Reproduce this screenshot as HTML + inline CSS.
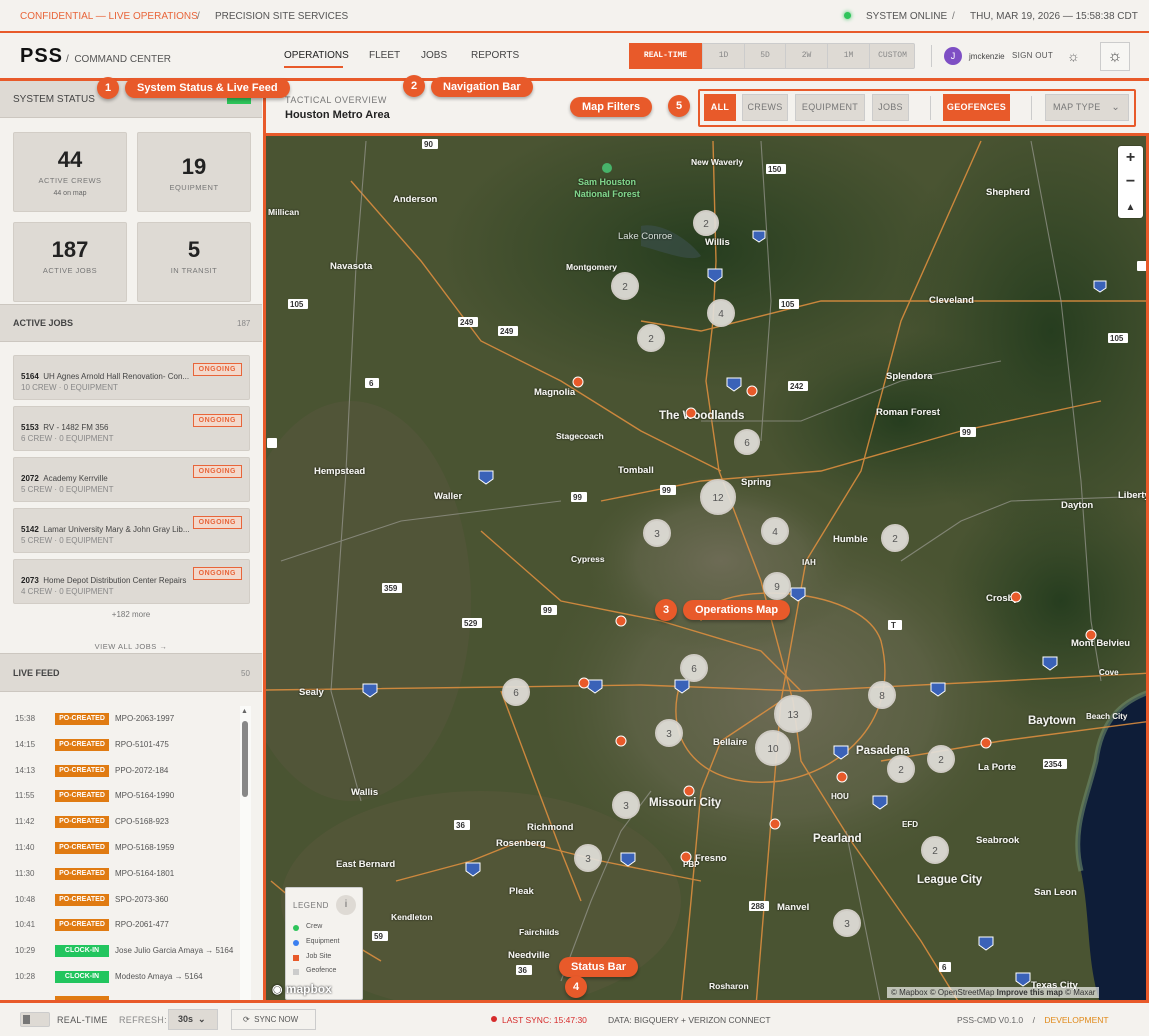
<!DOCTYPE html>
<html><head><meta charset="utf-8"><style>
*{box-sizing:border-box;margin:0;padding:0}
body{width:1149px;height:1036px;overflow:hidden;background:#f4f2ee;font-family:"Liberation Sans",sans-serif;color:#333;position:relative}
.a{position:absolute}
.t{font-size:10px;letter-spacing:0}
.hdr{background:#dedad4;border-bottom:1px solid #ccc7c0}
.card{background:#dedad4;border:1px solid #d2cdc6;border-radius:2px;text-align:center}
.job{background:#dedad4;border:1px solid #d2cdc6;border-radius:2px;left:13px;width:237px;height:45px}
.job b{font-size:8px;color:#222}.job span{font-size:8px;color:#444}
.og{position:absolute;right:7px;top:7px;border:1px solid #e8653a;color:#e8653a;font-size:7px;font-weight:bold;padding:2px 5px;background:#f3d9cc;letter-spacing:.5px}
.sub{font-size:8px;color:#888;position:absolute;left:7px;top:27px}
.feed{left:15px;font-size:8px;color:#666;width:230px;height:14px}
.tag{position:absolute;left:40px;width:54px;height:12px;color:#fff;font-size:7px;font-weight:bold;text-align:center;line-height:12px}
.fn{position:absolute;left:100px;color:#555}
.btn{position:absolute;top:94px;height:27px;background:#dedad4;border:1px solid #ccc;font-size:9px;color:#777;line-height:25px;text-align:center;letter-spacing:.3px}
.on{background:#e85a2a;color:#fff;border-color:#e85a2a;font-weight:bold}
.pill{position:absolute;background:#e85a2a;color:#fff;font-weight:bold;font-size:11px;border-radius:10px;height:20px;line-height:20px;padding:0 12px;box-shadow:0 2px 3px rgba(0,0,0,.3)}
.num{position:absolute;background:#e85a2a;color:#fff;font-weight:bold;font-size:11px;border-radius:50%;width:22px;height:22px;line-height:22px;text-align:center;box-shadow:0 2px 3px rgba(0,0,0,.3)}
.seg{position:absolute;top:43px;height:26px;border-right:1px solid #ccc;font-family:"Liberation Mono",monospace;font-size:8px;color:#888;text-align:center;line-height:26px}
</style></head><body>
<!-- top bar -->
<div class="a t" style="left:20px;top:11px;color:#e8653a">CONFIDENTIAL — LIVE OPERATIONS</div>
<div class="a t" style="left:197px;top:11px;color:#777">/</div>
<div class="a t" style="left:215px;top:11px;color:#555">PRECISION SITE SERVICES</div>
<div class="a" style="left:844px;top:12px;width:7px;height:7px;border-radius:50%;background:#2ec45a;box-shadow:0 0 4px #2ec45a"></div>
<div class="a t" style="left:866px;top:11px;color:#555">SYSTEM ONLINE</div>
<div class="a t" style="left:952px;top:11px;color:#777">/</div>
<div class="a t" style="left:970px;top:11px;color:#555">THU, MAR 19, 2026 — 15:58:38 CDT</div>
<div class="a" style="left:0;top:31px;width:1149px;height:2px;background:#e85a2a"></div>
<!-- header -->
<div class="a" style="left:20px;top:45px;font-size:20px;font-weight:bold;color:#111;letter-spacing:1px">PSS</div>
<div class="a" style="left:66px;top:54px;font-size:10px;color:#555">/ &nbsp;COMMAND CENTER</div>
<div class="a t" style="left:284px;top:50px;color:#222">OPERATIONS</div>
<div class="a" style="left:284px;top:66px;width:59px;height:2px;background:#e85a2a"></div>
<div class="a t" style="left:369px;top:50px;color:#444">FLEET</div>
<div class="a t" style="left:421px;top:50px;color:#444">JOBS</div>
<div class="a t" style="left:471px;top:50px;color:#444">REPORTS</div>
<div class="a" style="left:629px;top:43px;width:286px;height:26px;background:#dedad4;border:1px solid #ccc;border-radius:2px"></div>
<div class="seg" style="left:629px;width:74px;background:#e85a2a;color:#fff;font-weight:bold">REAL-TIME</div>
<div class="seg" style="left:703px;width:42px">1D</div>
<div class="seg" style="left:745px;width:41px">5D</div>
<div class="seg" style="left:786px;width:42px">2W</div>
<div class="seg" style="left:828px;width:42px">1M</div>
<div class="seg" style="left:870px;width:45px;border:none">CUSTOM</div>
<div class="a" style="left:931px;top:45px;width:1px;height:22px;background:#ccc"></div>
<div class="a" style="left:944px;top:47px;width:18px;height:18px;border-radius:50%;background:#7e4fc4;color:#fff;font-size:9px;text-align:center;line-height:18px">J</div>
<div class="a" style="left:969px;top:52px;font-size:8px;color:#444">jmckenzie</div>
<div class="a" style="left:1012px;top:51px;font-size:8px;color:#555;letter-spacing:.3px">SIGN OUT</div>
<div class="a" style="left:1067px;top:48px;font-size:14px;color:#666">☼</div>
<div class="a" style="left:1100px;top:42px;width:30px;height:29px;border:1px solid #ccc;background:#f7f6f3;text-align:center;font-size:16px;line-height:27px;color:#444">☼</div>
<div class="a" style="left:0;top:78px;width:1149px;height:3px;background:#e85a2a"></div>
<!-- left panel -->
<div class="a hdr" style="left:0;top:81px;width:262px;height:37px"></div>
<div class="a t" style="left:13px;top:94px;color:#444;font-size:10px">SYSTEM STATUS</div>
<div class="a" style="left:227px;top:96px;width:24px;height:8px;background:#2ec45a"></div>
<div class="a card" style="left:13px;top:132px;width:114px;height:80px"><div style="font-size:22px;font-weight:bold;color:#222;margin-top:14px">44</div><div style="font-size:7.5px;color:#777;letter-spacing:.5px;margin-top:3px">ACTIVE CREWS</div><div style="font-size:7px;color:#666;margin-top:5px">44 on map</div></div>
<div class="a card" style="left:137px;top:132px;width:114px;height:80px"><div style="font-size:22px;font-weight:bold;color:#222;margin-top:21px">19</div><div style="font-size:7.5px;color:#777;letter-spacing:.5px;margin-top:3px">EQUIPMENT</div></div>
<div class="a card" style="left:13px;top:222px;width:114px;height:80px"><div style="font-size:22px;font-weight:bold;color:#222;margin-top:14px">187</div><div style="font-size:7.5px;color:#777;letter-spacing:.5px;margin-top:3px">ACTIVE JOBS</div></div>
<div class="a card" style="left:137px;top:222px;width:114px;height:80px"><div style="font-size:22px;font-weight:bold;color:#222;margin-top:14px">5</div><div style="font-size:7.5px;color:#777;letter-spacing:.5px;margin-top:3px">IN TRANSIT</div></div>
<div class="a hdr" style="left:0;top:304px;width:262px;height:38px;border-top:1px solid #ccc7c0"></div>
<div class="a t" style="left:13px;top:318px;color:#444;font-size:9px;font-weight:bold">ACTIVE JOBS</div>
<div class="a" style="left:237px;top:319px;font-size:8px;color:#888">187</div>
<div class="a job" style="top:355px"><div style="position:absolute;left:7px;top:10px"><b>5164</b> <span>UH Agnes Arnold Hall Renovation- Con...</span></div><div class="og">ONGOING</div><div class="sub">10 CREW · 0 EQUIPMENT</div></div>
<div class="a job" style="top:406px"><div style="position:absolute;left:7px;top:10px"><b>5153</b> <span>RV - 1482 FM 356</span></div><div class="og">ONGOING</div><div class="sub">6 CREW · 0 EQUIPMENT</div></div>
<div class="a job" style="top:457px"><div style="position:absolute;left:7px;top:10px"><b>2072</b> <span>Academy Kerrville</span></div><div class="og">ONGOING</div><div class="sub">5 CREW · 0 EQUIPMENT</div></div>
<div class="a job" style="top:508px"><div style="position:absolute;left:7px;top:10px"><b>5142</b> <span>Lamar University Mary &amp; John Gray Lib...</span></div><div class="og">ONGOING</div><div class="sub">5 CREW · 0 EQUIPMENT</div></div>
<div class="a job" style="top:559px"><div style="position:absolute;left:7px;top:10px"><b>2073</b> <span>Home Depot Distribution Center Repairs</span></div><div class="og">ONGOING</div><div class="sub">4 CREW · 0 EQUIPMENT</div></div>
<div class="a" style="left:0;top:610px;width:262px;text-align:center;font-size:8px;color:#777">+182 more</div>
<div class="a" style="left:0;top:642px;width:262px;text-align:center;font-size:7.5px;color:#777;letter-spacing:.5px">VIEW ALL JOBS →</div>
<div class="a hdr" style="left:0;top:653px;width:262px;height:39px;border-top:1px solid #ccc7c0"></div>
<div class="a t" style="left:13px;top:668px;color:#444;font-size:9px;font-weight:bold">LIVE FEED</div>
<div class="a" style="left:241px;top:669px;font-size:8px;color:#888">50</div>
<div class="a" style="left:240px;top:706px;width:11px;height:294px;background:#fafaf8"></div>
<div class="a" style="left:242px;top:721px;width:6px;height:76px;background:#888;border-radius:3px"></div>
<div class="a" style="left:241px;top:708px;font-size:7px;color:#666">▲</div>
<div id="feed"></div>
<!-- filter bar -->
<div class="a" style="left:263px;top:81px;width:3px;height:920px;background:#e85a2a"></div>
<div class="a" style="left:285px;top:95px;font-size:9px;color:#777;letter-spacing:.5px">TACTICAL OVERVIEW</div>
<div class="a" style="left:285px;top:109px;font-size:11px;color:#222;font-weight:bold">Houston Metro Area</div>
<div class="a" style="left:698px;top:89px;width:438px;height:38px;border:2px solid #e85a2a;border-radius:2px"></div>
<div class="btn on" style="left:704px;width:32px">ALL</div>
<div class="btn" style="left:742px;width:46px">CREWS</div>
<div class="btn" style="left:795px;width:70px">EQUIPMENT</div>
<div class="btn" style="left:872px;width:37px">JOBS</div>
<div class="a" style="left:930px;top:96px;width:1px;height:24px;background:#ccc"></div>
<div class="btn on" style="left:943px;width:67px">GEOFENCES</div>
<div class="a" style="left:1031px;top:96px;width:1px;height:24px;background:#ccc"></div>
<div class="btn" style="left:1045px;width:84px;text-align:left;padding-left:7px">MAP TYPE <span style="position:absolute;right:8px;font-size:10px">⌄</span></div>
<!-- map -->
<div class="a" style="left:263px;top:133px;width:886px;height:870px;border:3px solid #e85a2a;overflow:hidden">
<svg width="886" height="870" viewBox="265 135 886 870" style="display:block;font-family:'Liberation Sans',sans-serif">
<defs>
<radialGradient id="city" cx="0.5" cy="0.5" r="0.5"><stop offset="0" stop-color="#6d6b55"/><stop offset="0.6" stop-color="#62654a" stop-opacity=".7"/><stop offset="1" stop-color="#4d5634" stop-opacity="0"/></radialGradient>
<radialGradient id="dk" cx="0.5" cy="0.5" r="0.5"><stop offset="0" stop-color="#263d1f"/><stop offset="1" stop-color="#2c4222" stop-opacity="0"/></radialGradient>
<filter id="sh"><feDropShadow dx="0" dy="0" stdDeviation="1" flood-color="#000" flood-opacity=".9"/></filter>
</defs>
<rect x="265" y="135" width="886" height="870" fill="#4a5432"/>
<ellipse cx="700" cy="250" rx="260" ry="140" fill="url(#dk)"/>
<ellipse cx="1050" cy="330" rx="160" ry="220" fill="url(#dk)"/>
<ellipse cx="900" cy="420" rx="140" ry="90" fill="url(#dk)"/>
<ellipse cx="1060" cy="600" rx="120" ry="120" fill="url(#dk)"/>
<ellipse cx="350" cy="600" rx="120" ry="200" fill="#57573c" opacity=".6"/>
<ellipse cx="780" cy="700" rx="250" ry="190" fill="url(#city)"/>
<ellipse cx="720" cy="560" rx="140" ry="90" fill="url(#city)"/>
<ellipse cx="480" cy="900" rx="200" ry="110" fill="#5a573b" opacity=".5"/>
<path d="M1151 690 C1120 700 1100 720 1095 760 C1085 800 1070 830 1080 870 C1090 920 1085 960 1100 1005 L1151 1005Z" fill="#0e1d38"/>
<path d="M1151 690 C1120 700 1100 720 1095 760 C1085 800 1070 830 1080 870" fill="none" stroke="#6e8c6a" stroke-width="5" opacity=".6"/>
<path d="M640 225 C660 220 690 240 700 255 C690 262 660 250 640 245Z" fill="#3b4f49" opacity=".7"/>
<g fill="none" stroke="#e3913f" stroke-width="1.4" opacity=".85">
<path d="M712 140 L715 260 L712 320 L705 380 L718 470 L760 580 L792 700 L800 760 L850 840 L920 940 L960 1005"/>
<path d="M265 689 L500 686 L640 684 L800 690 L1000 680 L1151 672"/>
<path d="M980 140 L900 320 L860 470 L805 560 L780 700 L770 820 L755 1005"/>
<path d="M680 1005 L690 900 L700 790 L720 740 L780 700"/>
<path d="M480 530 L560 600 L660 620 L760 650 L800 690"/>
<path d="M600 500 L700 480 L820 470 L960 430 L1100 400"/>
<path d="M640 320 L700 330 L820 300 L1151 300"/>
<path d="M700 620 C700 580 860 580 880 640 C900 720 840 770 780 780 C700 790 660 740 680 680"/>
<path d="M500 690 L560 850 L580 900"/>
<path d="M520 840 L600 860 L700 880"/>
<path d="M880 760 L1000 740 L1151 720"/>
<path d="M350 180 L420 260 L480 340 L560 380 L640 430 L720 470"/>
<path d="M395 880 L470 860 L520 840"/>
<path d="M270 880 L330 930 L380 960"/>
</g>
<g fill="none" stroke="#9a9a92" stroke-width="1.1" opacity=".7">
<path d="M365 140 L355 265 L345 470 L330 690 L360 800"/>
<path d="M560 980 L590 900 L620 830 L650 790"/>
<path d="M760 140 L770 300 L760 440"/>
<path d="M900 560 L960 520 L1010 500 L1151 495"/>
<path d="M1030 140 L1060 300 L1080 480 L1090 620 L1100 680"/>
<path d="M280 560 L400 520 L560 500"/>
<path d="M845 830 L880 1005"/>
<path d="M700 420 L800 420 L900 380 L1000 360"/>
</g>
<g font-size="8" font-weight="bold" fill="#333">
<rect x="421" y="138" width="16" height="10" fill="#fff" rx="1"/><text x="423" y="146">90</text>
<rect x="765" y="163" width="20" height="10" fill="#fff" rx="1"/><text x="767" y="171">150</text>
<rect x="287" y="298" width="20" height="10" fill="#fff" rx="1"/><text x="289" y="306">105</text>
<rect x="778" y="298" width="20" height="10" fill="#fff" rx="1"/><text x="780" y="306">105</text>
<rect x="457" y="316" width="20" height="10" fill="#fff" rx="1"/><text x="459" y="324">249</text>
<rect x="497" y="325" width="20" height="10" fill="#fff" rx="1"/><text x="499" y="333">249</text>
<rect x="364" y="377" width="14" height="10" fill="#fff" rx="1"/><text x="368" y="385">6</text>
<rect x="787" y="380" width="20" height="10" fill="#fff" rx="1"/><text x="789" y="388">242</text>
<rect x="570" y="491" width="16" height="10" fill="#fff" rx="1"/><text x="572" y="499">99</text>
<rect x="659" y="484" width="16" height="10" fill="#fff" rx="1"/><text x="661" y="492">99</text>
<rect x="959" y="426" width="16" height="10" fill="#fff" rx="1"/><text x="961" y="434">99</text>
<rect x="1107" y="332" width="20" height="10" fill="#fff" rx="1"/><text x="1109" y="340">105</text>
<rect x="1136" y="260" width="14" height="10" fill="#fff" rx="1"/>
<rect x="266" y="437" width="10" height="10" fill="#fff" rx="1"/>
<rect x="381" y="582" width="20" height="10" fill="#fff" rx="1"/><text x="383" y="590">359</text>
<rect x="540" y="604" width="16" height="10" fill="#fff" rx="1"/><text x="542" y="612">99</text>
<rect x="461" y="617" width="20" height="10" fill="#fff" rx="1"/><text x="463" y="625">529</text>
<rect x="887" y="619" width="14" height="10" fill="#fff" rx="1"/><text x="890" y="627">T</text>
<rect x="453" y="819" width="16" height="10" fill="#fff" rx="1"/><text x="455" y="827">36</text>
<rect x="748" y="900" width="20" height="10" fill="#fff" rx="1"/><text x="750" y="908">288</text>
<rect x="371" y="930" width="16" height="10" fill="#fff" rx="1"/><text x="373" y="938">59</text>
<rect x="515" y="964" width="16" height="10" fill="#fff" rx="1"/><text x="517" y="972">36</text>
<rect x="938" y="961" width="12" height="10" fill="#fff" rx="1"/><text x="941" y="969">6</text>
<rect x="1042" y="758" width="24" height="10" fill="#fff" rx="1"/><text x="1043" y="766">2354</text>
</g>
<g fill="#3a62b8" stroke="#fff" stroke-width="1">
<path d="M707 268 h14 v8 l-7 5 l-7 -5z"/><path d="M726 377 h14 v8 l-7 5 l-7 -5z"/><path d="M752 230 h12 v7 l-6 4 l-6 -4z"/>
<path d="M478 470 h14 v8 l-7 5 l-7 -5z"/><path d="M362 683 h14 v8 l-7 5 l-7 -5z"/><path d="M587 679 h14 v8 l-7 5 l-7 -5z"/>
<path d="M674 679 h14 v8 l-7 5 l-7 -5z"/><path d="M930 682 h14 v8 l-7 5 l-7 -5z"/><path d="M1042 656 h14 v8 l-7 5 l-7 -5z"/>
<path d="M790 587 h14 v8 l-7 5 l-7 -5z"/><path d="M833 745 h14 v8 l-7 5 l-7 -5z"/><path d="M872 795 h14 v8 l-7 5 l-7 -5z"/>
<path d="M620 852 h14 v8 l-7 5 l-7 -5z"/><path d="M465 862 h14 v8 l-7 5 l-7 -5z"/><path d="M978 936 h14 v8 l-7 5 l-7 -5z"/>
<path d="M1015 972 h14 v8 l-7 5 l-7 -5z"/><path d="M1093 280 h12 v7 l-6 4 l-6 -4z"/>
</g>
<g fill="#f2f2ee" font-size="9.5" filter="url(#sh)" font-weight="bold">
<text x="392" y="201">Anderson</text><text x="329" y="268">Navasota</text><text x="565" y="269" font-size="8.5">Montgomery</text>
<text x="617" y="238" font-weight="normal" fill="#cfd6d0">Lake Conroe</text><text x="704" y="244">Willis</text><text x="690" y="164" font-size="8.5">New Waverly</text>
<text x="985" y="194">Shepherd</text><text x="928" y="302">Cleveland</text><text x="533" y="394">Magnolia</text>
<text x="658" y="418" font-size="11.5">The Woodlands</text><text x="885" y="378">Splendora</text><text x="875" y="414">Roman Forest</text>
<text x="555" y="438" font-size="8.5">Stagecoach</text><text x="617" y="472">Tomball</text><text x="313" y="473">Hempstead</text>
<text x="433" y="498">Waller</text><text x="740" y="484">Spring</text><text x="832" y="541">Humble</text>
<text x="1060" y="507">Dayton</text><text x="1117" y="497">Liberty</text><text x="570" y="561" font-size="8.5">Cypress</text>
<text x="985" y="600">Crosby</text><text x="1070" y="645">Mont Belvieu</text><text x="298" y="694">Sealy</text>
<text x="1027" y="723" font-size="11.5">Baytown</text><text x="855" y="753" font-size="11.5">Pasadena</text><text x="712" y="744">Bellaire</text>
<text x="977" y="769">La Porte</text><text x="350" y="794">Wallis</text><text x="648" y="805" font-size="11.5">Missouri City</text>
<text x="526" y="829">Richmond</text><text x="495" y="845">Rosenberg</text><text x="812" y="841" font-size="11.5">Pearland</text>
<text x="975" y="842">Seabrook</text><text x="335" y="866">East Bernard</text><text x="694" y="860">Fresno</text>
<text x="916" y="882" font-size="11.5">League City</text><text x="1033" y="894">San Leon</text><text x="508" y="893">Pleak</text>
<text x="776" y="909">Manvel</text><text x="390" y="919" font-size="8.5">Kendleton</text><text x="518" y="934" font-size="8.5">Fairchilds</text>
<text x="507" y="957">Needville</text><text x="1030" y="987">Texas City</text><text x="708" y="988" font-size="8.5">Rosharon</text>
<text x="267" y="214" font-size="8.5">Millican</text><text x="1085" y="718" font-size="8">Beach City</text><text x="1098" y="674" font-size="8">Cove</text>
<text x="801" y="564" font-size="8">IAH</text><text x="830" y="798" font-size="8">HOU</text><text x="901" y="826" font-size="8">EFD</text><text x="682" y="866" font-size="8">PBP</text>
</g>
<g fill="#7fd28a" font-size="9" font-weight="bold" filter="url(#sh)" text-anchor="middle"><text x="606" y="184">Sam Houston</text><text x="606" y="196">National Forest</text></g>
<circle cx="606" cy="167" r="5" fill="#47b36a"/>
<g fill="#e85a2a" stroke="#fff" stroke-width="1">
<circle cx="577" cy="381" r="5"/><circle cx="751" cy="390" r="5"/><circle cx="690" cy="412" r="5"/><circle cx="620" cy="620" r="5"/><circle cx="583" cy="682" r="5"/><circle cx="620" cy="740" r="5"/><circle cx="688" cy="790" r="5"/><circle cx="841" cy="776" r="5"/><circle cx="774" cy="823" r="5"/><circle cx="685" cy="856" r="5"/><circle cx="985" cy="742" r="5"/><circle cx="1090" cy="634" r="5"/><circle cx="1015" cy="596" r="5"/>
</g>
<g fill="#e2dfda" fill-opacity=".92" stroke="#cfcbc4" stroke-width="2">
<circle cx="705" cy="222" r="12"/><circle cx="624" cy="285" r="13"/><circle cx="720" cy="312" r="13"/><circle cx="650" cy="337" r="13"/><circle cx="746" cy="441" r="12"/><circle cx="717" cy="496" r="17"/><circle cx="656" cy="532" r="13"/><circle cx="774" cy="530" r="13"/><circle cx="894" cy="537" r="13"/><circle cx="776" cy="585" r="13"/><circle cx="693" cy="667" r="13"/><circle cx="515" cy="691" r="13"/><circle cx="881" cy="694" r="13"/><circle cx="792" cy="713" r="18"/><circle cx="668" cy="732" r="13"/><circle cx="772" cy="747" r="17"/><circle cx="940" cy="758" r="13"/><circle cx="900" cy="768" r="13"/><circle cx="625" cy="804" r="13"/><circle cx="934" cy="849" r="13"/><circle cx="587" cy="857" r="13"/><circle cx="846" cy="922" r="13"/>
</g>
<g fill="#555" font-size="10" text-anchor="middle">
<text x="705" y="226">2</text><text x="624" y="289">2</text><text x="720" y="316">4</text><text x="650" y="341">2</text><text x="746" y="445">6</text><text x="717" y="500">12</text><text x="656" y="536">3</text><text x="774" y="534">4</text><text x="894" y="541">2</text><text x="776" y="589">9</text><text x="693" y="671">6</text><text x="515" y="695">6</text><text x="881" y="698">8</text><text x="792" y="717">13</text><text x="668" y="736">3</text><text x="772" y="751">10</text><text x="940" y="762">2</text><text x="900" y="772">2</text><text x="625" y="808">3</text><text x="934" y="853">2</text><text x="587" y="861">3</text><text x="846" y="926">3</text>
</g>
</svg>
<div class="a" style="left:852px;top:10px;width:25px;height:72px;background:#fff;border-radius:3px;box-shadow:0 0 0 1px rgba(0,0,0,.15);text-align:center;font-size:16px;color:#333;font-weight:bold;line-height:24px">+<br>−<br><span style="font-size:10px">▲</span></div>
<div class="a" style="left:19px;top:751px;width:78px;height:113px;background:#f4f2ee;border:1px solid #ccc;border-radius:2px">
<div class="a" style="left:7px;top:13px;font-size:8px;color:#777;letter-spacing:.5px">LEGEND</div>
<div class="a" style="left:50px;top:7px;width:20px;height:20px;border-radius:50%;background:#dedad4;text-align:center;font-size:10px;line-height:20px;color:#666">i</div>
<div class="a" style="left:7px;top:37px;width:6px;height:6px;border-radius:50%;background:#2ec45a"></div><div class="a" style="left:20px;top:35px;font-size:7px;color:#555">Crew</div>
<div class="a" style="left:7px;top:52px;width:6px;height:6px;border-radius:50%;background:#3b7ff0"></div><div class="a" style="left:20px;top:50px;font-size:7px;color:#555">Equipment</div>
<div class="a" style="left:7px;top:67px;width:6px;height:6px;background:#e85a2a"></div><div class="a" style="left:20px;top:65px;font-size:7px;color:#555">Job Site</div>
<div class="a" style="left:7px;top:81px;width:6px;height:6px;background:#ccc"></div><div class="a" style="left:20px;top:79px;font-size:7px;color:#555">Geofence</div>
</div>
<div class="a" style="left:6px;top:846px;color:#fff;font-size:12px;font-weight:bold;text-shadow:0 0 2px #000">◉ mapbox</div>
<div class="a" style="left:621px;top:851px;background:rgba(255,255,255,.65);font-size:8px;color:#333;padding:1px 4px">© Mapbox © OpenStreetMap <b>Improve this map</b> © Maxar</div>
</div>
<!-- annotations -->
<div class="num" style="left:97px;top:77px">1</div><div class="pill" style="left:125px;top:78px">System Status &amp; Live Feed</div>
<div class="num" style="left:403px;top:75px">2</div><div class="pill" style="left:431px;top:77px">Navigation Bar</div>
<div class="pill" style="left:570px;top:97px">Map Filters</div>
<div class="num" style="left:668px;top:95px">5</div>
<div class="num" style="left:655px;top:599px">3</div><div class="pill" style="left:683px;top:600px">Operations Map</div>
<div class="pill" style="left:559px;top:957px">Status Bar</div>
<div class="num" style="left:565px;top:976px">4</div>
<!-- status bar -->
<div class="a" style="left:0;top:1000px;width:1149px;height:3px;background:#e85a2a"></div>
<div class="a" style="left:20px;top:1012px;width:30px;height:15px;background:#dedad4;border:1px solid #ccc;border-radius:2px"><div style="margin:2px;width:7px;height:9px;background:#777"></div></div>
<div class="a" style="left:57px;top:1015px;font-size:9px;color:#555;letter-spacing:.3px">REAL-TIME</div>
<div class="a" style="left:119px;top:1015px;font-size:9px;color:#888;letter-spacing:.3px">REFRESH:</div>
<div class="a" style="left:168px;top:1009px;width:50px;height:21px;background:#dedad4;border:1px solid #ccc;font-size:9px;font-weight:bold;line-height:19px;padding-left:9px;color:#444">30s &nbsp;⌄</div>
<div class="a" style="left:231px;top:1009px;width:85px;height:21px;border:1px solid #ccc;font-size:8px;line-height:19px;padding-left:11px;color:#555">⟳ &nbsp;SYNC NOW</div>
<div class="a" style="left:491px;top:1016px;width:6px;height:6px;border-radius:50%;background:#d62b2b"></div>
<div class="a" style="left:502px;top:1015px;font-size:8.5px;color:#d62b2b">LAST SYNC: 15:47:30</div>
<div class="a" style="left:608px;top:1015px;font-size:8.5px;color:#555">DATA: BIGQUERY + VERIZON CONNECT</div>
<div class="a" style="left:957px;top:1015px;font-size:8.5px;color:#666">PSS-CMD V0.1.0 &nbsp;&nbsp;&nbsp;/&nbsp;&nbsp;&nbsp; <span style="color:#e08a1a">DEVELOPMENT</span></div>
<script>
var d=[["15:38","PO-CREATED","MPO-2063-1997"],["14:15","PO-CREATED","RPO-5101-475"],["14:13","PO-CREATED","PPO-2072-184"],["11:55","PO-CREATED","MPO-5164-1990"],["11:42","PO-CREATED","CPO-5168-923"],["11:40","PO-CREATED","MPO-5168-1959"],["11:30","PO-CREATED","MPO-5164-1801"],["10:48","PO-CREATED","SPO-2073-360"],["10:41","PO-CREATED","RPO-2061-477"],["10:29","CLOCK-IN","Jose Julio Garcia Amaya → 5164"],["10:28","CLOCK-IN","Modesto Amaya → 5164"]];
var h="";d.forEach(function(r,i){var y=713+i*25.8;h+='<div class="a feed" style="top:'+y+'px"><span style="position:absolute;left:0;top:1px">'+r[0]+'</span><div class="tag" style="background:'+(r[1]=="CLOCK-IN"?"#22c55e":"#e07b12")+'">'+r[1]+'</div><span class="fn" style="top:1px">'+r[2]+'</span></div>';});
h+='<div class="a" style="left:55px;top:996px;width:54px;height:4px;background:#e07b12"></div>';
document.getElementById("feed").innerHTML=h;
</script>
</body></html>
